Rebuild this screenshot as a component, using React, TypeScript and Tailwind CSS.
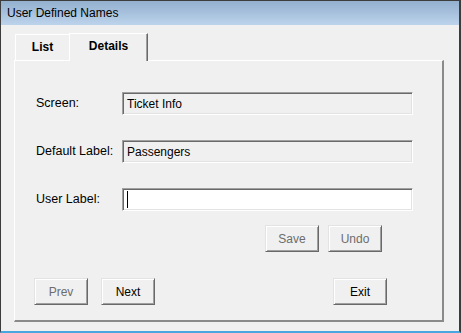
import React from 'react';

const font = { fontFamily: '"Liberation Sans", Arial, sans-serif' };

function Field({ value, editable }: { value?: string; editable?: boolean }) {
  return (
    <div
      className={`flex h-[23px] w-[291px] items-center border border-t-[#a0a0a0] border-l-[#a0a0a0] border-b-white border-r-white pl-[4px] text-[12px] text-black shadow-[inset_1px_1px_0_#696969,inset_-1px_-1px_0_#e3e3e3] ${
        editable ? 'bg-white' : 'bg-[#f0f0f0]'
      }`}
    >
      {editable ? <span className="h-[17px] w-px bg-black" /> : value}
    </div>
  );
}

function Button({ label, disabled }: { label: string; disabled?: boolean }) {
  return (
    <button
      className={`flex h-[27px] w-[54px] items-center justify-center border border-t-[#e3e3e3] border-l-[#e3e3e3] border-b-[#696969] border-r-[#696969] bg-[#f0f0f0] text-[12px] shadow-[inset_1px_1px_0_#ffffff,inset_-1px_-1px_0_#a0a0a0] ${
        disabled ? 'text-[#6d6d6d]' : 'text-black'
      }`}
    >
      {label}
    </button>
  );
}

function Row({ label, children }: { label: string; children: React.ReactNode }) {
  return (
    <div className="flex items-center">
      <span className="w-[87px] pl-px text-[12.5px] text-black">{label}</span>
      {children}
    </div>
  );
}

export default function App() {
  return (
    <div
      style={font}
      className="flex h-[333px] w-[461px] flex-col border-t border-l border-r-2 border-b-2 border-t-[#3c3c3c] border-l-[#3c3c3c] border-r-[#3c3c3c] border-b-[#4aa6de] bg-[#f0f0f0]"
    >
      <div className="flex h-[24px] items-center bg-gradient-to-b from-[#93b0cf] to-[#bcd3eb] pl-[6px] text-[12px] text-black">
        User Defined Names
      </div>
      <div className="flex flex-1 flex-col pl-[13px] pr-[15px] pt-[8px] pb-[9px]">
        <div className="flex h-[27px] items-end pl-px">
          <div className="flex h-[26px] w-[54px] items-center justify-center border-t border-l border-white pb-[2px] text-[12px] font-bold text-black">
            List
          </div>
          <div className="relative z-10 -mb-px flex h-[28px] w-[79px] items-center justify-center border-t border-l border-r border-t-white border-l-white border-r-[#696969] bg-[#f0f0f0] pb-[3px] text-[12px] font-bold text-black shadow-[inset_-1px_0_0_#a0a0a0]">
            Details
          </div>
        </div>
        <div className="flex flex-1 flex-col border-t border-l border-r-2 border-b-2 border-t-white border-l-white border-r-[#8a8a8a] border-b-[#8a8a8a] pl-[20px] pt-[31px]">
          <div className="flex flex-col gap-[25px]">
            <Row label="Screen:">
              <Field value="Ticket Info" />
            </Row>
            <Row label="Default Label:">
              <Field value="Passengers" />
            </Row>
            <Row label="User Label:">
              <Field editable />
            </Row>
          </div>
          <div className="mt-[14px] flex gap-[9px] pl-[230px]">
            <Button label="Save" disabled />
            <Button label="Undo" disabled />
          </div>
          <div className="mt-[26px] flex -ml-px">
            <Button label="Prev" disabled />
            <div className="ml-[13px]">
              <Button label="Next" />
            </div>
            <div className="ml-[178px]">
              <Button label="Exit" />
            </div>
          </div>
        </div>
      </div>
    </div>
  );
}
